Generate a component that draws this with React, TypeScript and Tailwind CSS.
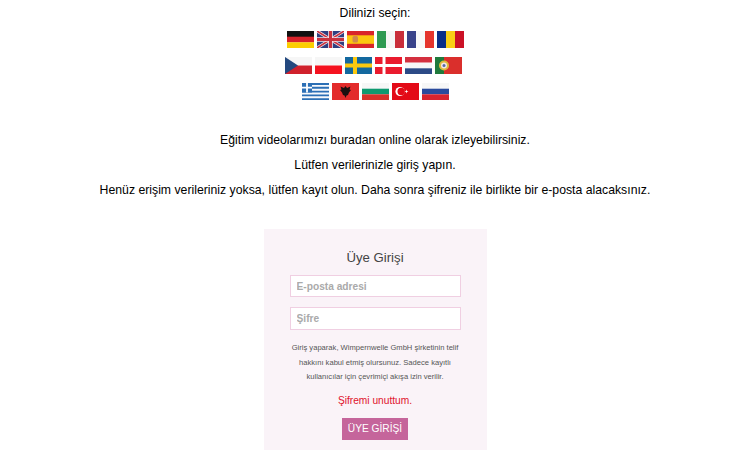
function Flag({ children }: { children: React.ReactNode }) {
  return (
    <svg viewBox="0 0 27 17" className="h-[17px] w-[27px] shrink-0" preserveAspectRatio="none">
      {children}
    </svg>
  );
}

const row1 = [
  // de
  <><rect width="27" height="6" fill="#111" /><rect y="5.7" width="27" height="5.7" fill="#d8222a" /><rect y="11.3" width="27" height="5.7" fill="#fcce00" /></>,
  // uk
  <>
    <rect width="27" height="17" fill="#2f3f80" />
    <path d="M0 0L27 17M27 0L0 17" stroke="#f3e6ea" strokeWidth="3" />
    <path d="M0 0L27 17M27 0L0 17" stroke="#c8313e" strokeWidth="1.5" />
    <path d="M13.5 0V17M0 8.5H27" stroke="#f3e6ea" strokeWidth="4.6" />
    <path d="M13.5 0V17M0 8.5H27" stroke="#c8313e" strokeWidth="3" />
  </>,
  // es
  <>
    <rect width="27" height="17" fill="#d9252a" />
    <rect y="4.3" width="27" height="8.5" fill="#fbc70f" />
    <rect x="5.5" y="5" width="5.5" height="6.5" rx="1.5" fill="#d08a4c" />
  </>,
  // it
  <><rect width="9" height="17" fill="#2f9a52" /><rect x="9" width="9" height="17" fill="#f6f6f6" /><rect x="18" width="9" height="17" fill="#c92e3a" /></>,
  // fr
  <><rect width="9" height="17" fill="#39438a" /><rect x="9" width="9" height="17" fill="#f8f8f8" /><rect x="18" width="9" height="17" fill="#e5352d" /></>,
  // ro
  <><rect width="9" height="17" fill="#0a2f87" /><rect x="9" width="9" height="17" fill="#f9cf16" /><rect x="18" width="9" height="17" fill="#cb1126" /></>,
];

const row2 = [
  // cz
  <>
    <rect width="27" height="8.5" fill="#f6f6f6" />
    <rect y="8.5" width="27" height="8.5" fill="#d0212c" />
    <path d="M0 0L13 8.5L0 17Z" fill="#24497f" />
  </>,
  // pl
  <><rect width="27" height="8.5" fill="#f6f6f6" /><rect y="8.5" width="27" height="8.5" fill="#f5121f" /></>,
  // se
  <>
    <rect width="27" height="17" fill="#13689f" />
    <rect x="8" width="4" height="17" fill="#fcc90f" />
    <rect y="6.5" width="27" height="4" fill="#fcc90f" />
  </>,
  // dk
  <>
    <rect width="27" height="17" fill="#ea1b2e" />
    <rect x="7.5" width="3" height="17" fill="#fff" />
    <rect y="7" width="27" height="3" fill="#fff" />
  </>,
  // nl
  <><rect width="27" height="5.7" fill="#d4303f" /><rect y="5.7" width="27" height="5.6" fill="#f7f7f7" /><rect y="11.3" width="27" height="5.7" fill="#2c4a86" /></>,
  // pt
  <>
    <rect width="27" height="17" fill="#da2f2c" />
    <rect width="9" height="17" fill="#1f7a3c" />
    <circle cx="9" cy="8.5" r="5" fill="#e0b93c" />
    <circle cx="9" cy="8.5" r="3" fill="#f2e6e6" />
    <circle cx="9" cy="8.5" r="1.5" fill="#5468a8" />
  </>,
];

const row3 = [
  // gr
  <>
    <rect width="27" height="17" fill="#f7f9fc" />
    <path d="M0 1H27M0 4.8H27M0 8.6H27M0 12.4H27M0 16.1H27" stroke="#2c6fb5" strokeWidth="1.9" />
    <rect width="10" height="9.5" fill="#2c6fb5" />
    <path d="M5 0V9.5M0 4.7H10" stroke="#fff" strokeWidth="1.8" />
  </>,
  // al
  <>
    <rect width="27" height="17" fill="#e32b2b" />
    <path d="M13.5 3L15 5L18.5 3.5L17.5 6.5L19 7L17 9.5L16 12L14.5 12.5L13.5 15L12.5 12.5L11 12L10 9.5L8 7L9.5 6.5L8.5 3.5L12 5Z" fill="#1b0f0f" />
  </>,
  // bg
  <><rect width="27" height="5.7" fill="#f7f7f7" /><rect y="5.7" width="27" height="5.6" fill="#0f9a70" /><rect y="11.3" width="27" height="5.7" fill="#d8312b" /></>,
  // tr
  <>
    <rect width="27" height="17" fill="#e30a17" />
    <circle cx="8" cy="8.5" r="4.6" fill="#fff" />
    <circle cx="9.2" cy="8.5" r="3.7" fill="#e30a17" />
    <path d="M14.5 6.5L14 8L12.5 8.5L14 9L14.5 10.5L15 9L16.5 8.5L15 8Z" fill="#fff" />
  </>,
  // ru
  <><rect width="27" height="5.7" fill="#f7f7f7" /><rect y="5.7" width="27" height="5.6" fill="#2a4a9c" /><rect y="11.3" width="27" height="5.7" fill="#d8232e" /></>,
];

function FlagRow({ flags, className }: { flags: React.ReactNode[]; className: string }) {
  return (
    <div className={"flex justify-center gap-[3px] " + className}>
      {flags.map((f, i) => (
        <Flag key={i}>{f}</Flag>
      ))}
    </div>
  );
}

export default function App() {
  return (
    <div className="h-[450px] overflow-hidden bg-white font-['Liberation_Sans',Arial,sans-serif] text-black">
      {/* Language */}
      <div className="pt-[5px] text-center">
        <p className="text-[12.25px] leading-[16px]">Dilinizi seçin:</p>
        <FlagRow flags={row1} className="mt-[10px]" />
        <FlagRow flags={row2} className="mt-[9px] pr-[3px]" />
        <FlagRow flags={row3} className="mt-[9px] pl-[1px]" />
      </div>

      {/* Intro */}
      <div className="mt-[32px] space-y-[9px] text-center text-[12.25px] leading-[16px]">
        <p>Eğitim videolarımızı buradan online olarak izleyebilirsiniz.</p>
        <p>Lütfen verilerinizle giriş yapın.</p>
        <p>Henüz erişim verileriniz yoksa, lütfen kayıt olun. Daha sonra şifreniz ile birlikte bir e-posta alacaksınız.</p>
      </div>

      {/* Login */}
      <div className="mx-auto mt-[31px] flex h-[221px] w-[223px] flex-col items-center bg-[#faf3f8] pt-[20px]">
        <h2 className="text-[13.2px] leading-[17px] text-[#444]">Üye Girişi</h2>
        <input
          placeholder="E-posta adresi"
          className="mt-[9px] h-[22px] w-[171px] border border-[#f0cfe2] bg-white px-[6px] text-[10.2px] font-bold outline-none placeholder:text-[#aaa]"
        />
        <input
          placeholder="Şifre"
          className="mt-[10px] h-[23px] w-[171px] border border-[#f0cfe2] bg-white px-[6px] text-[10.2px] font-bold outline-none placeholder:text-[#aaa]"
        />
        <p className="mt-[11px] w-[180px] text-center text-[7.6px] leading-[14.5px] text-[#555]">
          Giriş yaparak, Wimpernwelle GmbH şirketinin telif hakkını kabul etmiş olursunuz. Sadece kayıtlı kullanıcılar için çevrimiçi akışa izin verilir.
        </p>
        <a className="mt-[9px] text-[10.2px] leading-[13px] text-[#e0112b]">Şifremi unuttum.</a>
        <button className="mt-[11px] h-[22px] w-[66px] bg-[#c5659b] text-[10.2px] text-white">ÜYE GİRİŞİ</button>
      </div>
    </div>
  );
}
